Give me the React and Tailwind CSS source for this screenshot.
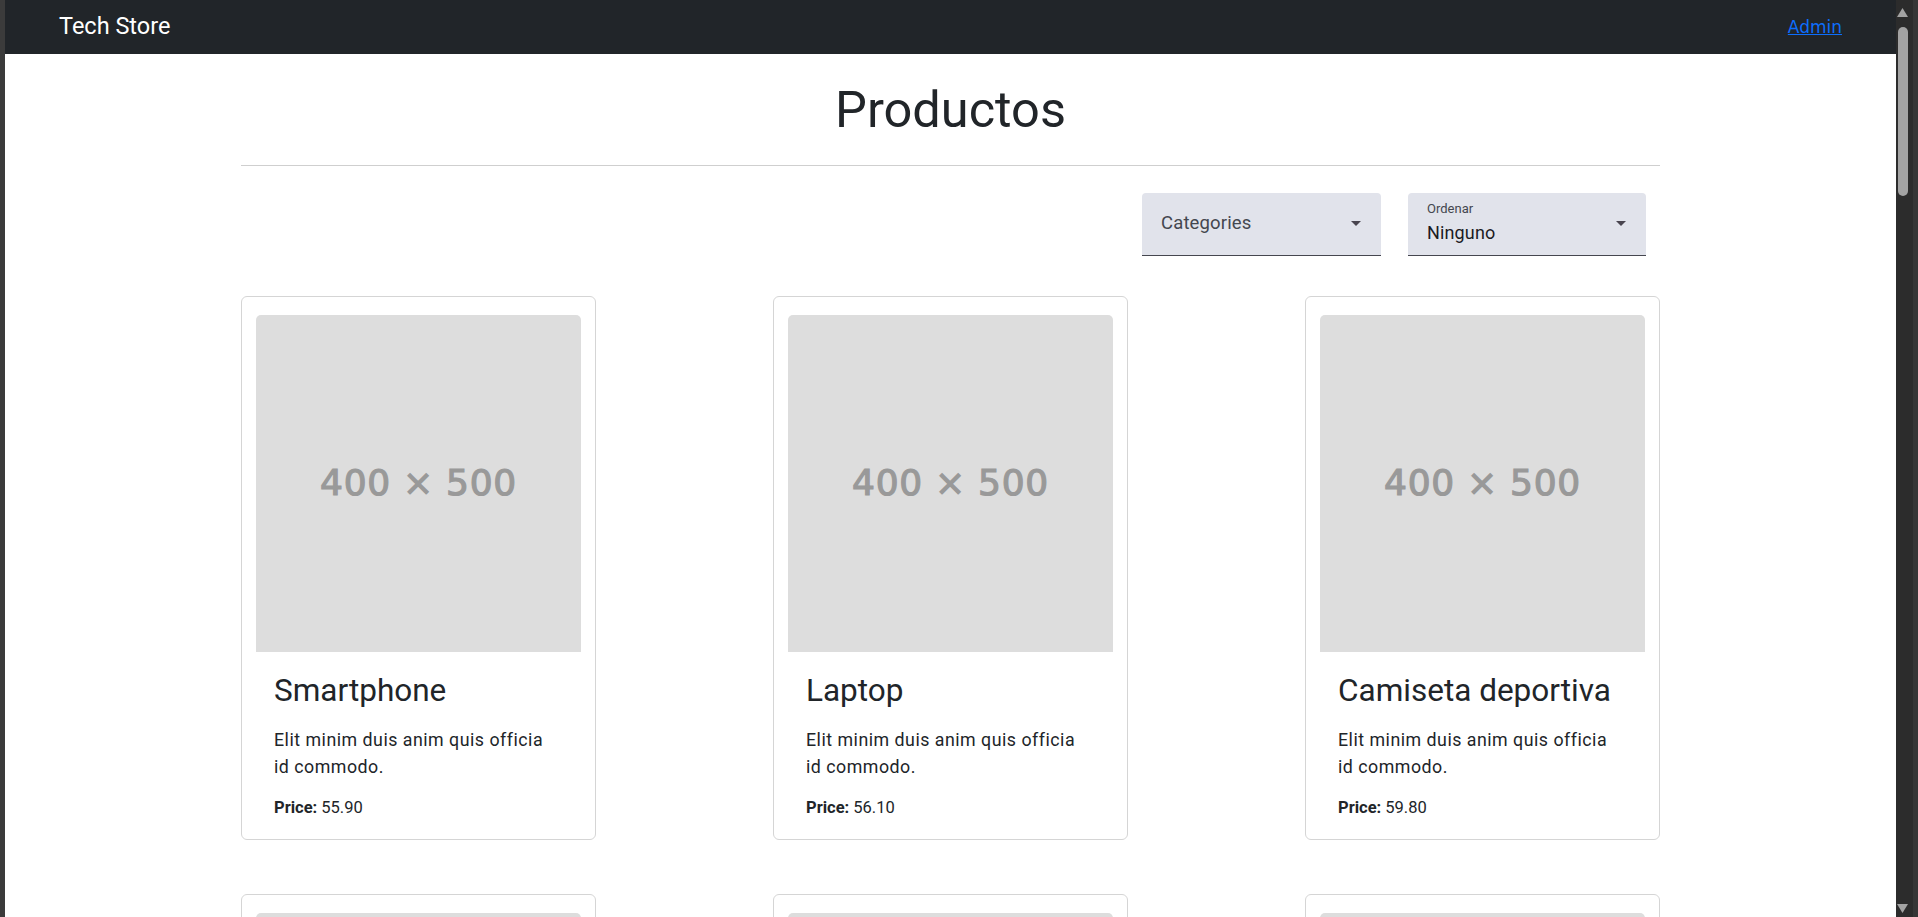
import React from "react";

const products = [
  { name: "Smartphone", price: "55.90" },
  { name: "Laptop", price: "56.10" },
  { name: "Camiseta deportiva", price: "59.80" },
  { name: "Auriculares", price: "42.00" },
  { name: "Reloj", price: "80.50" },
  { name: "Zapatillas", price: "65.30" },
];

// little MUI style drop arrow
const DropArrow = () => (
  <svg width="10" height="5" viewBox="0 0 10 5" className="shrink-0">
    <path d="M0 0 L10 0 L5 5 Z" fill="#49454f" />
  </svg>
);

const ProductCard = ({ name, price }) => (
  <div className="w-[355px] border border-[#d5d5d5] rounded-[6px] bg-white px-[14px] pt-[18px] pb-[19px]">
    {/* placeholder image */}
    <div className="h-[337px] bg-[#dddddd] rounded-t-[5px] flex items-center justify-center">
      <span className="text-[36px] tracking-[0.7px] text-[#999999] font-['DejaVu_Sans',sans-serif] [-webkit-text-stroke:1.2px_#999999]">
        400 × 500
      </span>
    </div>
    <div className="px-[18px] pt-[20px]">
      <h2 className="text-[31.5px] leading-[1.2] text-[#212529]">{name}</h2>
      <p className="mt-[17px] w-[280px] text-[17.8px] leading-[27px] tracking-[0.5px] text-[#212529]">
        Elit minim duis anim quis officia id commodo.
      </p>
      <p className="mt-[16px] text-[16.5px] leading-[24px] text-[#212529]">
        <span className="font-bold">Price:</span> {price}
      </p>
    </div>
  </div>
);

export default function App() {
  return (
    <div className="flex h-screen overflow-hidden bg-[#2b2b2b] font-['Roboto',sans-serif]">
      {/* window frame */}
      <div className="w-[5px] shrink-0 bg-[#3b3b3b]" />

      <div className="flex-1 flex flex-col bg-white overflow-hidden">
        {/* Navbar */}
        <header className="h-[54px] shrink-0 bg-[#212529] flex items-center justify-between px-[54px]">
          <span className="text-white text-[23.5px]">Tech Store</span>
          <a href="#" className="text-[#0d6efd] underline text-[17px] font-['DejaVu_Sans',sans-serif] pt-[2px]">
            Admin
          </a>
        </header>

        <main className="w-[1419px] mx-auto">
          <h1 className="mt-[26px] text-center text-[50.5px] leading-[1.2] text-[#212529]">Productos</h1>
          <hr className="mt-[24px] border-t border-[#cfcfcf]" />

          {/* filters */}
          <div className="flex justify-end gap-[27px] pr-[14px] mt-[27px]">
            <div className="w-[239px] h-[63px] bg-[#e1e3eb] rounded-t-[4px] border-b border-[#45464f] flex items-center justify-between pl-[19px] pr-[20px]">
              <span className="text-[18.5px] tracking-[0.15px] text-[#44474f]">Categories</span>
              <DropArrow />
            </div>
            <div className="w-[238px] h-[63px] bg-[#e1e3eb] rounded-t-[4px] border-b border-[#45464f] flex items-center justify-between pl-[19px] pr-[20px]">
              <div className="flex flex-col self-start pt-[9px]">
                <span className="text-[13px] leading-[14px] text-[#44474f]">Ordenar</span>
                <span className="mt-[5px] text-[18px] leading-[24px] tracking-[0.15px] text-[#1b1b1f]">Ninguno</span>
              </div>
              <DropArrow />
            </div>
          </div>

          {/* product grid */}
          <div className="mt-[40px] grid grid-cols-[355px_355px_355px] justify-between gap-y-[54px] pb-[40px]">
            {products.map((p) => (
              <ProductCard key={p.name} {...p} />
            ))}
          </div>
        </main>
      </div>

      {/* scrollbar */}
      <div className="w-[22px] shrink-0 bg-[#2c2c2c] flex flex-col items-center pr-[4px] border-r-[5px] border-[#363636]">
        <svg width="11" height="9" viewBox="0 0 11 9" className="mt-[8px]">
          <path d="M0 9 L5.5 0 L11 9 Z" fill="#a3a3a3" />
        </svg>
        <div className="mt-[10px] w-[10px] h-[169px] rounded-full bg-[#a3a3a3]" />
        <div className="flex-1" />
        <svg width="11" height="9" viewBox="0 0 11 9" className="mb-[4px]">
          <path d="M0 0 L11 0 L5.5 9 Z" fill="#a3a3a3" />
        </svg>
      </div>
    </div>
  );
}
